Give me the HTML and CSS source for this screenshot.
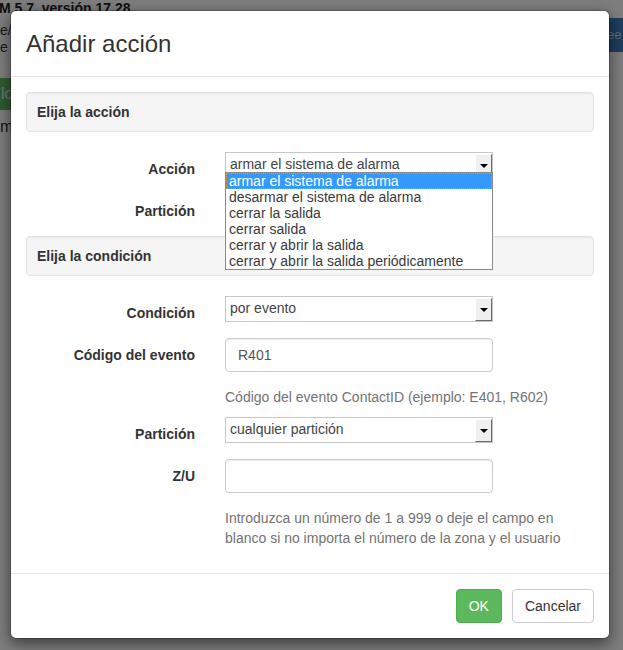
FILE: index.html
```html
<!DOCTYPE html>
<html lang="es">
<head>
<meta charset="utf-8">
<title>Añadir acción</title>
<link rel="stylesheet" href="styles.css">
</head>
<body>
<div class="page">
  <div class="page-title">M 5.7, versión 17.28</div>
  <div class="page-row">
    <div class="page-lines">e/<br>e .</div>
    <div class="page-btn page-btn-blue">ee</div>
  </div>
  <div class="page-rule"></div>
  <div class="page-btn page-btn-green">lo</div>
  <div class="page-text">m</div>
</div>
<div class="backdrop"></div>
<div class="modal">
  <div class="modal-header">
    <h4 class="modal-title">Añadir acción</h4>
  </div>
  <div class="modal-body">
    <div class="well">Elija la acción</div>
    <div class="form-row">
      <label class="control-label">Acción</label>
      <div class="control">
        <div class="sel">
          <span class="sel-text">armar el sistema de alarma</span>
          <span class="sel-btn"><span class="caret"></span></span>
        </div>
        <ul class="dropdown">
          <li class="opt opt-active">armar el sistema de alarma</li>
          <li class="opt">desarmar el sistema de alarma</li>
          <li class="opt">cerrar la salida</li>
          <li class="opt">cerrar salida</li>
          <li class="opt">cerrar y abrir la salida</li>
          <li class="opt">cerrar y abrir la salida periódicamente</li>
        </ul>
      </div>
    </div>
    <div class="form-row">
      <label class="control-label">Partición</label>
      <div class="control"></div>
    </div>
    <div class="well">Elija la condición</div>
    <div class="form-row">
      <label class="control-label">Condición</label>
      <div class="control">
        <div class="sel">
          <span class="sel-text">por evento</span>
          <span class="sel-btn"><span class="caret"></span></span>
        </div>
      </div>
    </div>
    <div class="form-row">
      <label class="control-label">Código del evento</label>
      <div class="control">
        <div class="input">R401</div>
      </div>
    </div>
    <div class="form-row help-row">
      <p class="help">Código del evento ContactID (ejemplo: E401, R602)</p>
    </div>
    <div class="form-row">
      <label class="control-label">Partición</label>
      <div class="control">
        <div class="sel">
          <span class="sel-text">cualquier partición</span>
          <span class="sel-btn"><span class="caret"></span></span>
        </div>
      </div>
    </div>
    <div class="form-row">
      <label class="control-label">Z/U</label>
      <div class="control">
        <div class="input"></div>
      </div>
    </div>
    <div class="form-row help-row">
      <p class="help">Introduzca un número de 1 a 999 o deje el campo en blanco si no importa el número de la zona y el usuario</p>
    </div>
  </div>
  <div class="modal-footer">
    <button class="btn btn-ok">OK</button>
    <button class="btn btn-default">Cancelar</button>
  </div>
</div>
</body>
</html>
```

FILE: styles.css
```css
html, body {
  margin: 0;
  padding: 0;
}

body {
  font-family: "Liberation Sans", Arial, sans-serif;
  font-size: 14px;
  line-height: 20px;
  color: #333;
  width: 623px;
  height: 650px;
  overflow: hidden;
  position: relative;
}

/* underlying page */
.page {
  height: 650px;
  background: #fcfcfc;
  overflow: hidden;
}

.page-title {
  font-weight: bold;
  font-size: 14px;
  line-height: 20px;
  margin-top: -2px;
  margin-left: -1px;
  color: #222;
}

.page-row {
  display: flex;
  justify-content: space-between;
  align-items: flex-start;
  margin-top: 4px;
}

.page-lines {
  line-height: 17px;
  color: #333;
}

.page-btn {
  height: 34px;
  line-height: 34px;
  box-sizing: border-box;
  color: #fff;
  font-size: 14px;
}

.page-btn-blue {
  margin-top: -4px;
  width: 23px;
  padding-left: 7px;
  font-size: 13px;
  background: #3a7fbf;
  color: #cfd8e0;
  white-space: nowrap;
}

.page-rule {
  margin-top: 12px;
  height: 1px;
  background: #ffffff;
}

.page-btn-green {
  margin-top: 9px;
  height: 32px;
  line-height: 32px;
  width: 60px;
  padding-left: 1px;
  background: #5fb85f;
  color: #e8f3e8;
  font-size: 16px;
}

.page-text {
  margin-top: 7px;
  font-size: 16px;
  color: #333;
}

.backdrop {
  position: absolute;
  inset: 0;
  background: rgba(0, 0, 0, 0.5);
}

/* modal */
.modal {
  position: absolute;
  top: 10px;
  left: 10px;
  width: 600px;
  box-sizing: border-box;
  background: #fff;
  border: 1px solid rgba(0, 0, 0, 0.2);
  border-radius: 6px;
  box-shadow: 0 5px 15px rgba(0, 0, 0, 0.5);
  background-clip: padding-box;
}

.modal-header {
  padding: 15px;
  border-bottom: 1px solid #e5e5e5;
}

.modal-title {
  margin: 0;
  font-size: 24px;
  line-height: 35px;
  font-weight: normal;
  color: #333;
}

.modal-body {
  padding: 15px;
}

.well {
  box-sizing: border-box;
  height: 40px;
  padding: 10px;
  line-height: 18px;
  background: #f5f5f5;
  border: 1px solid #e3e3e3;
  border-radius: 4px;
  box-shadow: inset 0 1px 1px rgba(0, 0, 0, 0.05);
  font-weight: bold;
  margin-bottom: 20px;
}

.form-row {
  display: grid;
  grid-template-columns: 169px 268px;
  column-gap: 30px;
  margin-bottom: 15px;
  min-height: 27px;
}

.control-label {
  text-align: right;
  font-weight: bold;
  padding-top: 7px;
  line-height: 20px;
}

.control {
  position: relative;
}

.sel {
  box-sizing: border-box;
  height: 26px;
  border: 1px solid #c6c6c6;
  background: #fff;
  display: flex;
  color: #444;
}

.sel-text {
  flex: 1;
  padding-left: 4px;
  line-height: 23px;
}

.sel-btn {
  box-sizing: border-box;
  width: 17px;
  margin: 1px 0 0 0;
  height: 23px;
  background: #f0f0f0;
  border-top: 1px solid #fdfdfd;
  border-left: 1px solid #fdfdfd;
  border-right: 1px solid #6a6a6a;
  border-bottom: 1px solid #6a6a6a;
  display: flex;
  align-items: center;
  justify-content: center;
}

.caret {
  width: 0;
  height: 0;
  border-left: 4px solid transparent;
  border-right: 4px solid transparent;
  border-top: 4px solid #000;
}

.dropdown {
  position: absolute;
  top: 20px;
  left: 0;
  width: 268px;
  box-sizing: border-box;
  margin: 0;
  padding: 0;
  list-style: none;
  background: #fff;
  border: 1px solid #8a8a8a;
}

.opt {
  line-height: 16px;
  height: 16px;
  padding-left: 3px;
  color: #3a3a3a;
  white-space: nowrap;
  box-sizing: border-box;
}

.opt-active {
  background: #3399ff;
  color: #fff;
  outline: 1px dotted #d99a4a;
  outline-offset: -1px;
}

.input {
  box-sizing: border-box;
  height: 34px;
  padding: 6px 12px;
  line-height: 20px;
  border: 1px solid #ccc;
  border-radius: 4px;
  box-shadow: inset 0 1px 1px rgba(0, 0, 0, 0.075);
  color: #555;
}

.help-row {
  margin-bottom: 10px;
  min-height: 0;
}

.help {
  grid-column: 2 / span 2;
  width: 369px;
  margin: 0;
  color: #737373;
  line-height: 20px;
}

.modal-footer {
  padding: 15px;
  border-top: 1px solid #e5e5e5;
  display: flex;
  justify-content: flex-end;
  gap: 10px;
}

.btn {
  font-family: "Liberation Sans", Arial, sans-serif;
  font-size: 14px;
  line-height: 20px;
  padding: 6px 12px;
  border: 1px solid transparent;
  border-radius: 4px;
  margin: 0;
}

.btn-ok {
  background: #5cb85c;
  border-color: #4cae4c;
  color: #fff;
}

.btn-default {
  background: #fff;
  border-color: #ccc;
  color: #333;
}
```
